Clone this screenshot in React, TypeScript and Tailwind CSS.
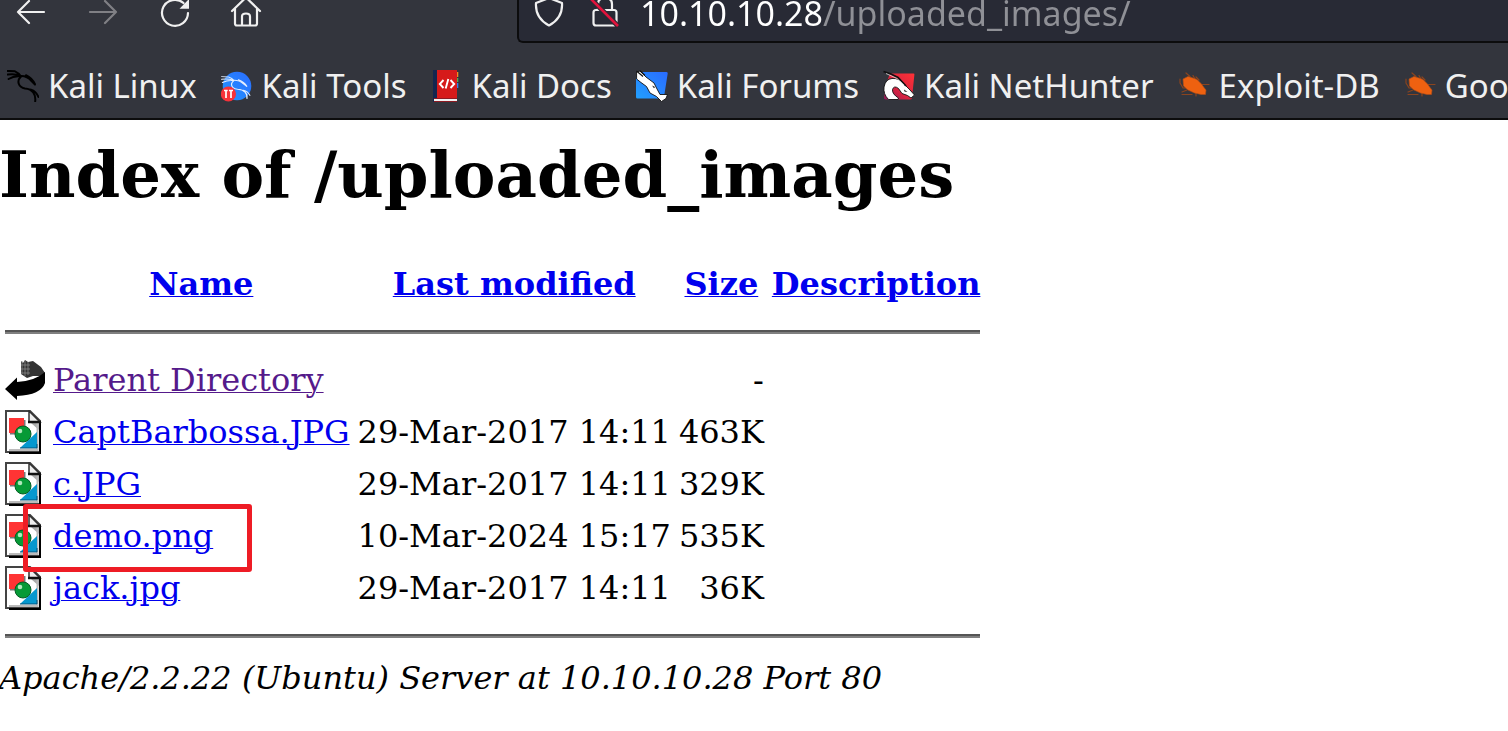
import type { ReactNode } from "react";

const stroke = {
  fill: "none",
  stroke: "currentColor",
  strokeWidth: 2.2,
  strokeLinecap: "round" as const,
  strokeLinejoin: "round" as const,
};

function Icon({ children }: { children: ReactNode }) {
  return (
    <svg viewBox="0 0 32 32" className="block size-8 shrink-0" aria-hidden="true">
      {children}
    </svg>
  );
}

function DragonLines() {
  return (
    <>
      <path d="M.7.9 8 1.3Q12 3 14 6.4M.7 4.6Q8 3.4 13.5 6M1.6 9Q7 5.6 13.5 6.4" />
      <path d="M13.5 6Q20 5.6 24.5 11L28 14.6M19 5.2Q25 8 28 14.2" />
      <path d="M13.7 6.8C9.6 11 11.2 17.4 18 18.4C25.5 19 29 24 28.2 31.4M24 19.6Q29.4 21.4 31.4 27" />
    </>
  );
}

function KaliLinuxIcon() {
  return (
    <Icon>
      <g {...stroke} stroke="#000" strokeWidth="2">
        <DragonLines />
      </g>
    </Icon>
  );
}

function KaliToolsIcon() {
  return (
    <Icon>
      <defs>
        <linearGradient id="tools" x1="1" y1="0" x2="0" y2="1">
          <stop offset="0" stopColor="#2b6cff" />
          <stop offset="1" stopColor="#2196ff" />
        </linearGradient>
      </defs>
      <circle cx="16" cy="16" r="14.3" fill="url(#tools)" />
      <g {...stroke} stroke="#e4efff" strokeWidth="1.3" transform="translate(0 6) scale(.92 .72)">
        <DragonLines />
      </g>
      <circle cx="7.4" cy="24" r="7.6" fill="#f6323a" />
      <path d="M3 20.5H6.7M5 20.5V28M8 20.5H12M10 20.5V28" fill="none" stroke="#fff" strokeWidth="1.7" />
    </Icon>
  );
}

function KaliDocsIcon() {
  return (
    <Icon>
      <path d="M27 2h1.3v5H27z" fill="#f28b20" />
      <path d="M27 8h1.3v4H27z" fill="#4caf50" />
      <path d="M27 13h1.3v5H27z" fill="#2f80ed" />
      <path d="M3 0h4v32H3z" fill="#14264f" />
      <path d="M7 0h20v28H7z" fill="#d61a1a" />
      <path d="M4 29h23v2H4z" fill="#f2f2f2" />
      <path d="M4 28h23v1H4zM4 31h23v1H4z" fill="#8d1a22" />
      <path d="M13.5 10 9.8 14l3.7 4M20.5 10l3.7 4-3.7 4M18.3 9l-2.6 9.5" fill="none" stroke="#fff" strokeWidth="1.9" />
    </Icon>
  );
}

function KaliForumsIcon() {
  return (
    <Icon>
      <defs>
        <linearGradient id="forums" x1="1" y1="0" x2="0" y2="1">
          <stop offset="0" stopColor="#2a6bff" />
          <stop offset="1" stopColor="#22a0ff" />
        </linearGradient>
      </defs>
      <path d="M5 2H30.5Q32 2 31.7 3.5L28 27Q27.7 28.5 26 28.5H1.5Q0 28.5 0 27V8Z" fill="url(#forums)" />
      <path
        d="M.6 2 4 1 10 7 18 13 20.500 18 24 24.500 31.500 24.500 30 28.500 25.500 31.500 20.500 26.500 14 23 10.500 16.500 5 12.500 .6 9Z"
        fill="#fff"
        stroke="#111"
        strokeWidth=".9"
      />
      <path d="M.5 1 7 6.500M4 .8 9 5.500" fill="none" stroke="#111" strokeWidth="1.200" />
      <path d="M16 15.500l3 1.500-1 1.200Z" fill="#111" />
    </Icon>
  );
}

function NetHunterIcon() {
  return (
    <Icon>
      <defs>
        <linearGradient id="hunter" x1="1" y1="0" x2="0" y2="1">
          <stop offset="0" stopColor="#ff3236" />
          <stop offset=".6" stopColor="#d62240" />
          <stop offset="1" stopColor="#8c1c5a" />
        </linearGradient>
      </defs>
      <path d="M7 3.500H30.500Q31.600 3.500 31.400 4.500L29 28Q28.800 29.500 27 29.500H3Q.5 29.500 1 27L3 14Z" fill="url(#hunter)" />
      <path
        d="M5.500 29.500Q0 24 1 17 2.500 9 9 8.500 16 8 20 13L27 20 31.500 25 28 28 24.500 25.500 19 23.500 15.500 18.500Q11 15 9.500 19.500 9 24 15.500 28L15 29.500Z"
        fill="#fff"
        stroke="#111"
        strokeWidth=".9"
      />
      <path d="M.5 1.500 8 4 15 7.500 23 16" fill="none" stroke="#111" strokeWidth="1.800" />
      <path d="M3 3.500 14 8.500 21 15" fill="none" stroke="#ddd" strokeWidth=".8" />
      <path d="M21 19.500l3.500 2.500-3-.5Z" fill="#111" />
    </Icon>
  );
}

function ExploitIcon() {
  return (
    <Icon>
      <g fill="none" stroke="#8a441f" strokeWidth="1.200" strokeLinecap="round">
        <path d="M8 3 12 6.500M15 5.500 17 9M21 10 18 7M23 14.500H31M2 13 5 18 9 18M4 24.500H14M9 20 4 22M18 23V26M2 13V9" />
      </g>
      <path
        d="M5 9 10 6.500 15 8 19 9.500 23 13.500 26 17.500 28 20 27.500 24.500 23 24.500 16.500 23 10 20 5.500 16Z"
        fill="#ee6110"
        stroke="#b04d18"
        strokeWidth=".6"
      />
    </Icon>
  );
}

const bookmarks = [
  { label: "Kali Linux", icon: <KaliLinuxIcon /> },
  { label: "Kali Tools", icon: <KaliToolsIcon /> },
  { label: "Kali Docs", icon: <KaliDocsIcon /> },
  { label: "Kali Forums", icon: <KaliForumsIcon /> },
  { label: "Kali NetHunter", icon: <NetHunterIcon /> },
  { label: "Exploit-DB", icon: <ExploitIcon /> },
  { label: "Google Hacking DB", icon: <ExploitIcon /> },
];

function BrowserChrome() {
  return (
    <header className="overflow-hidden border-b-2 border-[#0c0c0d] bg-[#33353d] font-['Noto_Sans',sans-serif] leading-[46px] text-[#f0f0f0]">
      <div className="-mt-[19px] flex h-[62px] items-center gap-10 pl-[14px]">
        <button type="button" aria-label="Back">
          <Icon>
            <path {...stroke} d="M30 16H4M15 5 4 16l11 11" />
          </Icon>
        </button>
        <button type="button" aria-label="Forward" disabled className="text-[#808085]">
          <Icon>
            <path {...stroke} d="M4 16H30M19 5l11 11-11 11" />
          </Icon>
        </button>
        <button type="button" aria-label="Reload">
          <Icon>
            <path {...stroke} d="M30 17A13 13 0 1 1 25.500 7" />
            <path d="M31 3V12.800H21.500Z" fill="currentColor" />
          </Icon>
        </button>
        <button type="button" aria-label="Home">
          <Icon>
            <path {...stroke} d="M2 15 16 1.500 30 15M5 13V27.500Q5 29.500 7 29.500H25Q27 29.500 27 27.500V13" />
            <path {...stroke} d="M12 29V20.500Q12 17.500 16 17.500T20 20.500V29" />
          </Icon>
        </button>
        <div className="ml-[215px] flex h-full min-w-0 flex-1 items-center rounded-l-md border-2 border-r-0 border-[#0c0c0d] bg-[#282a35] pl-[14px]">
          <Icon>
            <path {...stroke} d="M16 2 29 7Q30 22 16 29.500 2 22 3 7Z" />
          </Icon>
          <span className="ml-6">
            <Icon>
              <path {...stroke} d="M9 14V8Q9 2 16 2T23 8V14M7 14H25Q27.500 14 27.500 16.500V27Q27.500 29.500 25 29.500H7Q4.500 29.500 4.500 27V16.500Q4.500 14 7 14Z" />
              <path d="M2 3 29 30" stroke="#282a35" strokeWidth="5" />
              <path d="M2 3 29 30" stroke="#e0143c" strokeWidth="2.600" />
            </Icon>
          </span>
          <input
            aria-label="Address"
            defaultValue="10.10.10.28/uploaded_images/"
            className="ml-[19px] min-w-0 flex-1 bg-[linear-gradient(to_right,#fff_183px,#8f9096_183px)] bg-clip-text pt-0.5 text-[34px] text-transparent outline-none"
          />
        </div>
      </div>
      <nav className="flex gap-6 pt-5 pb-[9px] pl-[7px] text-[33px]">
        {bookmarks.map((b) => (
          <a key={b.label} href="#" className="flex shrink-0 items-center gap-[9px] whitespace-nowrap">
            {b.icon}
            {b.label}
          </a>
        ))}
      </nav>
    </header>
  );
}

function ParentIcon() {
  return (
    <svg viewBox="0 0 40 44" className="block h-11 w-10" role="img" aria-label="Parent folder">
      <path d="M16 3 18 5 20 2 23 4 28 3 36 9 40 15V18L28 18 22 20 16 16Z" fill="#333" />
      <path d="M17 3V16M20 3V18M23 4V17M16 7H25M16 11H25M16 15H25" stroke="#888" strokeWidth=".8" />
      <path d="M0 31 12 19.500V24Q30 23 40 14V25Q36 37 12 38V42Z" fill="#000" />
    </svg>
  );
}

function ImageIcon() {
  return (
    <svg viewBox="0 0 40 44" className="block h-11 w-10" role="img" aria-label="Image file">
      <path d="M1 1H25L35 11V42H1Z" fill="#fff" stroke="#444" strokeWidth="2" />
      <path d="M26 13H34V20Z" fill="#aaa" />
      <path d="M32.500 13V40H4" fill="none" stroke="#bbb" strokeWidth="2" />
      <path d="M35 11V43H4" fill="none" stroke="#000" strokeWidth="2" />
      <path d="M4 8H19V23H4Z" fill="#ff3434" />
      <path d="M19 10H20.500V18H19ZM5 23H10V24.500H5Z" fill="#777" />
      <path d="M15 38 32 22V38Z" fill="#0698cf" />
      <path d="M15 38H32V34" fill="none" stroke="#075379" strokeWidth="1" />
      <circle cx="18" cy="24" r="8" fill="#069a36" stroke="#055d24" strokeWidth="1" />
      <circle cx="15" cy="21" r="2.300" fill="#b2e8bd" />
      <path d="M24 1V12H35Z" fill="#eee" stroke="#333" strokeWidth="1.500" />
      <path d="M23 12H36" stroke="#111" strokeWidth="2.500" />
    </svg>
  );
}

const files = [
  { name: "CaptBarbossa.JPG", date: "29-Mar-2017 14:11", size: "463K" },
  { name: "c.JPG", date: "29-Mar-2017 14:11", size: "329K" },
  { name: "demo.png", date: "10-Mar-2024 15:17", size: "535K", marked: true },
  { name: "jack.jpg", date: "29-Mar-2017 14:11", size: "36K" },
];

function RuleRow() {
  return (
    <tr>
      <td colSpan={5} className="p-[2px]">
        <hr className="my-4 h-1 border-t-2 border-b-2 border-t-[#555] border-b-[#808080]" />
      </td>
    </tr>
  );
}

export default function App() {
  return (
    <div className="min-h-screen overflow-x-hidden bg-white">
      <BrowserChrome />
      <main className="-ml-px pt-[17px] font-['DejaVu_Serif',serif] text-[32px] leading-[37px] text-black">
        <h1 className="mb-[44px] text-[64px] leading-[75px] font-bold">Index of /uploaded_images</h1>
        <table className="border-separate border-spacing-1">
          <thead>
            <tr className="h-12">
              <th className="p-[2px]" aria-label="Type" />
              {["Name", "Last modified", "Size", "Description"].map((h) => (
                <th key={h} className="p-[2px] text-center font-bold whitespace-nowrap">
                  <a href="#" className="text-[#0000ee] underline decoration-1">{h}</a>
                </th>
              ))}
            </tr>
          </thead>
          <tbody>
            <RuleRow />
            <tr>
              <td className="p-[2px]"><ParentIcon /></td>
              <td className="p-[2px] whitespace-nowrap">
                <a href="#" className="text-[#551a8b] underline decoration-1">Parent Directory</a>
              </td>
              <td className="p-[2px]" />
              <td className="p-[2px] text-right">-</td>
              <td className="p-[2px]" />
            </tr>
            {files.map((f) => (
              <tr key={f.name}>
                <td className="p-[2px]"><ImageIcon /></td>
                <td className="relative p-[2px] whitespace-nowrap">
                  <a href="#" className="text-[#0000ee] underline decoration-1">{f.name}</a>
                  {f.marked && (
                    <span className="pointer-events-none absolute -top-2 -left-7 h-[68px] w-[229px] rounded-[3px] border-[5px] border-[#ee1c25]" />
                  )}
                </td>
                <td className="p-[2px] text-right whitespace-nowrap">{f.date}</td>
                <td className="p-[2px] text-right">{f.size}</td>
                <td className="p-[2px]" />
              </tr>
            ))}
            <RuleRow />
          </tbody>
        </table>
        <address className="italic">Apache/2.2.22 (Ubuntu) Server at 10.10.10.28 Port 80</address>
      </main>
    </div>
  );
}
